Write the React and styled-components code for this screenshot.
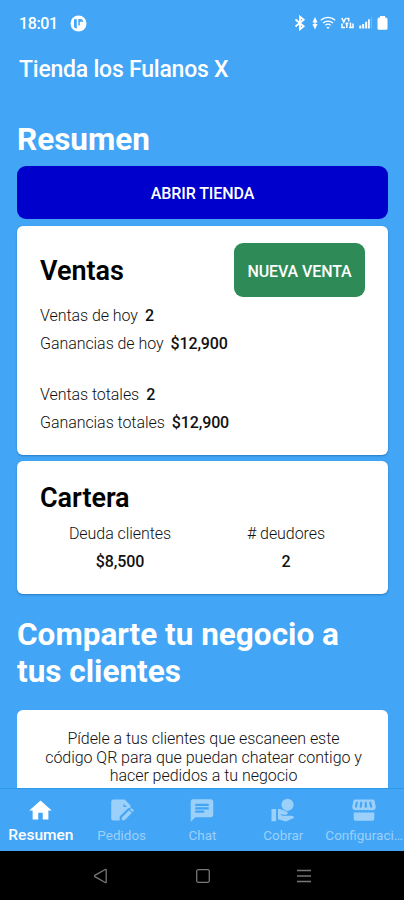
import React from "react";
import styled, { createGlobalStyle } from "styled-components";
import { MdHome, MdChat } from "react-icons/md";

const TABS = [
  { label: "Resumen", icon: <MdHome size={27} />, active: true },
  { label: "Pedidos", icon: <NoteEditIcon /> },
  { label: "Chat", icon: <MdChat size={28} /> },
  { label: "Cobrar", icon: <HandCoinIcon /> },
  { label: "Configuraci…", icon: <StoreIcon /> },
];

function NotificationIcon() {
  return (
    <svg width="17" height="17" viewBox="0 0 17 17">
      <circle cx="8.5" cy="8.5" r="8" fill="#fff" />
      <path d="M4 4.200h2.800v9.300A5 5 0 0 1 4 12z" fill="#42a5f5" />
      <path d="M8.300 4h1.500v6.500H8.300zM9.800 4q3.200-.2 3.400 2.800H9.800z" fill="#42a5f5" />
    </svg>
  );
}

function BluetoothIcon() {
  return (
    <svg width="12" height="16" viewBox="0 0 12 16" fill="none" stroke="#fff" strokeWidth="1.8">
      <path d="M1.500 4.500l8.200 6.800L6 14.300V1.700l3.700 3L1.500 11.500" />
    </svg>
  );
}

function DataArrowsIcon() {
  return (
    <svg width="6" height="13" viewBox="0 0 6 13" fill="#fff">
      <path d="M3 0l2.600 5.500H.4zM3 12.500L.4 7h5.200zM2.400 4h1.200v5H2.400z" />
    </svg>
  );
}

function WifiIcon() {
  return (
    <svg width="16" height="14" viewBox="0 0 16 14" fill="none" stroke="#fff">
      <path d="M.8 4.300a10.500 10.500 0 0 1 14.400 0M3 7a7.400 7.400 0 0 1 10 0M5.200 9.400a4.400 4.400 0 0 1 5.600 0" strokeWidth="1.200" />
      <path d="M6.300 11h3.400L8 13z" fill="#fff" stroke="none" />
    </svg>
  );
}

function VolteIcon() {
  return (
    <svg width="13" height="12" viewBox="0 0 13 12" fill="none" stroke="#fff" strokeWidth="1.500">
      <path d="M.8 1l2 4 2-4M5.500 1.400h2.200v3.200M1 6.500v4h3M5.800 5.500V11M4.400 6.500h3M9.500 5.500v5.800M12 6.500v4.800M8 10.600h4.500" />
    </svg>
  );
}

function SignalIcon() {
  return (
    <svg width="13" height="12" viewBox="0 0 13 12" fill="#fff">
      <path d="M.3 8.500h2v3h-2zM3.200 7h2v4.500h-2zM6.200 4.800h2v6.700h-2zM9.100 2.200h1.700v9.300H9.100z" />
      <path d="M11.900 0h.8v11.500h-.8z" opacity=".35" />
    </svg>
  );
}

function BatteryIcon() {
  return (
    <svg width="11" height="14" viewBox="0 0 11 14" fill="#fff">
      <path d="M3 0h5v1.500h1.200l1.300 1.300v9.700q0 1.200-1.200 1.200H1.700Q.5 13.700.5 12.500V2.800l1.300-1.300H3z" />
    </svg>
  );
}

function NoteEditIcon() {
  return (
    <svg width="26" height="26" viewBox="0 0 26 26" fill="currentColor">
      <path
        fillRule="evenodd"
        d="M4.400 2h11.200l6 6v2.200c-1-.2-2.200.2-3 1L10.700 19v4H4.400a2.200 2.200 0 0 1-2.200-2.200V4.200A2.200 2.200 0 0 1 4.400 2zM14.500 6.200v3.300h3.400z"
      />
      <path d="M12.800 20l7.300-7.300 2.700 2.700-7.300 7.300h-2.700zM20.900 11.900l.9-.9q.6-.5 1.200 0l1.500 1.500q.5.600 0 1.200l-.9.900z" />
    </svg>
  );
}

function HandCoinIcon() {
  return (
    <svg width="26" height="26" viewBox="0 0 26 26" fill="currentColor">
      <circle cx="17.500" cy="7.300" r="6.100" />
      <path d="M1.500 11.500h4.600v12.300H1.500zM8 11.500h2l6.800 2.600q1.300.8.800 2.200-.4 1-1.700 1h-3l-1.900-.7-.3.900 2.200.8h8.400q2.500 0 2.900 2L16 23.900l-8-2.200z" />
    </svg>
  );
}

function StoreIcon() {
  return (
    <svg width="26" height="26" viewBox="0 0 26 26" fill="currentColor">
      <path
        fillRule="evenodd"
        d="M4 2h18q1.300 0 1.600 1.300L24.700 9q.3 2-1 3.100Q22 13.500 20 12.200q-1.800 1.300-3.600 0-1.700 1.300-3.400 0-1.700 1.300-3.400 0-1.800 1.300-3.600 0-2 1.300-3.700-.1Q1 11 1.300 9l1.100-5.700Q2.700 2 4 2zM5 4.200L3.900 9.600q.8 1.200 2 .2L7 4.200zm4.300 0l-.7 5.400q1 1.200 2.300.2l.4-5.600zm4.400 0v5.600q1.300 1 2.400-.2l-.6-5.400zm4.400 0l1 5.600q1.200 1 2.200-.2l-1.200-5.400z"
      />
      <path d="M2.700 15h20.600v6.500q0 1.800-1.800 1.800h-17q-1.800 0-1.800-1.800z" />
    </svg>
  );
}

function Stat({ label, value }) {
  return (
    <StatRow>
      <Label>{label}</Label>
      <Value>{value}</Value>
    </StatRow>
  );
}

function App() {
  return (
    <>
      <GlobalStyle />
      <Screen>
        <StatusBar>
          <Clock>18:01</Clock>
          <NotificationIcon />
          <StatusIcons>
            <Connectivity>
              <BluetoothIcon />
              <DataArrowsIcon />
              <WifiIcon />
            </Connectivity>
            <VolteIcon />
            <SignalIcon />
            <BatteryIcon />
          </StatusIcons>
        </StatusBar>
        <Header>Tienda los Fulanos X</Header>

        <Content>
          <Heading>Resumen</Heading>
          <OpenButton>ABRIR TIENDA</OpenButton>

          <Card $height={229}>
            <CardHeader>
              <CardTitle>Ventas</CardTitle>
              <SaleButton>NUEVA VENTA</SaleButton>
            </CardHeader>
            <StatGroup>
              <Stat label="Ventas de hoy" value="2" />
              <Stat label="Ganancias de hoy" value="$12,900" />
            </StatGroup>
            <StatGroup>
              <Stat label="Ventas totales" value="2" />
              <Stat label="Ganancias totales" value="$12,900" />
            </StatGroup>
          </Card>

          <Card $height={133}>
            <WalletTitle>Cartera</WalletTitle>
            <WalletGrid>
              <WalletItem>
                <Label>Deuda clientes</Label>
                <Value>$8,500</Value>
              </WalletItem>
              <WalletItem>
                <Label># deudores</Label>
                <Value>2</Value>
              </WalletItem>
            </WalletGrid>
          </Card>

          <ShareHeading>
            Comparte tu negocio a
            <br />
            tus clientes
          </ShareHeading>
          <ShareCard>
            Pídele a tus clientes que escaneen este
            <br />
            código QR para que puedan chatear contigo y
            <br />
            hacer pedidos a tu negocio
          </ShareCard>
        </Content>

        <TabBar>
          {TABS.map(({ label, icon, active }) => (
            <Tab key={label} $active={active}>
              {icon}
              <TabLabel $active={active}>{label}</TabLabel>
            </Tab>
          ))}
        </TabBar>

        <SystemBar>
          <svg width="16" height="16" viewBox="0 0 16 16">
            <path d="M13.200 1.800v12.400q-.2.700-1 .3L1.800 8.600q-.7-.6 0-1.200l10.400-5.900q.8-.4 1 .3z" />
          </svg>
          <svg width="16" height="16" viewBox="0 0 16 16">
            <rect x="1.700" y="1.700" width="12.600" height="12.600" rx="1.500" />
          </svg>
          <svg width="16" height="16" viewBox="0 0 16 16">
            <path d="M1 2.500h14M1 8h14M1 13.500h14" />
          </svg>
        </SystemBar>
      </Screen>
    </>
  );
}

const GlobalStyle = createGlobalStyle`
  * {
    box-sizing: border-box;
  }
  body {
    margin: 0;
    font-family: Roboto, sans-serif;
  }
  button {
    border: none;
    padding: 0;
    font-family: inherit;
  }
`;

const Screen = styled.div`
  display: flex;
  flex-direction: column;
  width: 404px;
  height: 900px;
  overflow: hidden;
  background-color: #42a5f5;
  color: #fff;
`;

const StatusBar = styled.div`
  display: flex;
  align-items: center;
  height: 46px;
  padding: 0 16px 0 19px;
  flex-shrink: 0;
`;

const Clock = styled.span`
  width: 51px;
  padding-top: 1px;
  font-size: 16px;
  font-weight: 500;
  letter-spacing: -0.4px;
`;

const StatusIcons = styled.div`
  display: flex;
  align-items: center;
  gap: 5px;
  margin-left: auto;
`;

const Connectivity = styled.div`
  display: flex;
  align-items: center;

  svg:first-child {
    margin-right: 6px;
  }
  svg:last-child {
    margin-left: 2px;
  }
`;

const Header = styled.header`
  height: 48px;
  padding-left: 19px;
  line-height: 48px;
  font-size: 23px;
  font-weight: 500;
  letter-spacing: -0.23px;
  white-space: nowrap;
  flex-shrink: 0;
`;

const Content = styled.main`
  display: flex;
  flex-direction: column;
  height: 694px;
  padding: 27px 16px 0 17px;
  overflow: hidden;
  flex-shrink: 0;
`;

const Heading = styled.h1`
  margin: 0 0 8px;
  font-size: 31.5px;
  line-height: 37px;
  font-weight: 700;
  white-space: nowrap;
  flex-shrink: 0;
`;

const ShareHeading = styled(Heading)`
  margin: 16px 0 20px;
`;

const OpenButton = styled.button`
  height: 53px;
  margin-bottom: 7px;
  padding-top: 2px;
  border-radius: 9px;
  background-color: #0000cd;
  color: #fff;
  font-size: 16px;
  font-weight: 500;
  letter-spacing: -0.1px;
  flex-shrink: 0;
`;

const Card = styled.section`
  height: ${({ $height }) => $height}px;
  margin-bottom: 6px;
  padding: 17px 23px 0;
  border-radius: 6px;
  background-color: #fff;
  box-shadow: 0 1px 2px rgba(0, 60, 130, 0.4);
  color: #111;
  flex-shrink: 0;
`;

const CardHeader = styled.div`
  display: flex;
  align-items: center;
  justify-content: space-between;
  height: 54px;
  margin-bottom: 5px;
`;

const CardTitle = styled.h2`
  margin: 0;
  padding-top: 2px;
  font-size: 27px;
  line-height: 32px;
  font-weight: 600;
  letter-spacing: -0.05px;
  color: #000;
`;

const WalletTitle = styled(CardTitle)`
  padding-top: 4px;
`;

const SaleButton = styled.button`
  width: 131px;
  height: 54px;
  padding-top: 2px;
  border-radius: 9px;
  background-color: #2e8b57;
  color: #fff;
  font-size: 16px;
  font-weight: 500;
  letter-spacing: -0.1px;
`;

const StatGroup = styled.div`
  margin-bottom: 23px;
`;

const StatRow = styled.div`
  display: flex;
  gap: 7px;
`;

const Label = styled.span`
  font-size: 16px;
  line-height: 28px;
  font-weight: 300;
  letter-spacing: -0.06px;
  white-space: nowrap;
`;

const Value = styled.span`
  font-size: 16px;
  line-height: 28px;
  font-weight: 500;
  letter-spacing: -0.12px;
`;

const WalletGrid = styled.div`
  display: grid;
  grid-template-columns: 160px 172px;
  margin-top: 6px;
`;

const WalletItem = styled.div`
  display: flex;
  flex-direction: column;
  align-items: center;
`;

const ShareCard = styled.section`
  height: 200px;
  padding: 20px 0 0 2px;
  border-radius: 6px;
  background-color: #fff;
  color: #111;
  font-size: 16px;
  line-height: 18.5px;
  font-weight: 300;
  letter-spacing: -0.04px;
  text-align: center;
  white-space: nowrap;
  flex-shrink: 0;
`;

const TabBar = styled.nav`
  display: grid;
  grid-template-columns: repeat(5, 80.8px);
  height: 63px;
  border-top: 1px solid #2e98e8;
  flex-shrink: 0;
`;

const Tab = styled.div`
  display: flex;
  flex-direction: column;
  align-items: center;
  padding: 8px 0 0 1px;
  color: ${({ $active }) => ($active ? "#fff" : "#9bd0fb")};

  svg {
    height: 27px;
    flex-shrink: 0;
  }
`;

const TabLabel = styled.span`
  font-size: ${({ $active }) => ($active ? 15.5 : 13.5)}px;
  line-height: 22px;
  font-weight: ${({ $active }) => ($active ? 500 : 400)};
  white-space: nowrap;
`;

const SystemBar = styled.div`
  display: flex;
  justify-content: center;
  align-items: center;
  gap: 85.5px;
  height: 49px;
  padding-left: 1px;
  background-color: #000;
  flex-shrink: 0;

  svg {
    fill: none;
    stroke: #777;
    stroke-width: 1.3;
  }
`;

export default App;
